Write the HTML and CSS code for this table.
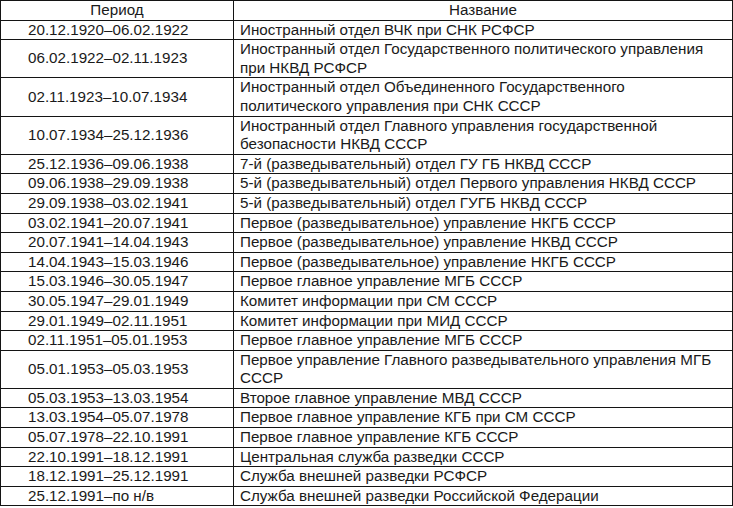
FILE: index.html
```html
<!DOCTYPE html>
<html lang="ru">
<head>
<meta charset="utf-8">
<title>Разведка</title>
<link rel="stylesheet" href="styles.css">
</head>
<body>
<table class="history">
  <colgroup>
    <col class="col-period">
    <col class="col-name">
  </colgroup>
  <thead>
    <tr><th>Период</th><th>Название</th></tr>
  </thead>
  <tbody>
    <tr><td class="period">20.12.1920–06.02.1922</td><td>Иностранный отдел ВЧК при СНК РСФСР</td></tr>
    <tr><td class="period">06.02.1922–02.11.1923</td><td>Иностранный отдел Государственного политического управления<br>при НКВД РСФСР</td></tr>
    <tr><td class="period">02.11.1923–10.07.1934</td><td>Иностранный отдел Объединенного Государственного<br>политического управления при СНК СССР</td></tr>
    <tr><td class="period">10.07.1934–25.12.1936</td><td>Иностранный отдел Главного управления государственной<br>безопасности НКВД СССР</td></tr>
    <tr><td class="period">25.12.1936–09.06.1938</td><td>7-й (разведывательный) отдел ГУ ГБ НКВД СССР</td></tr>
    <tr><td class="period">09.06.1938–29.09.1938</td><td>5-й (разведывательный) отдел Первого управления НКВД СССР</td></tr>
    <tr><td class="period">29.09.1938–03.02.1941</td><td>5-й (разведывательный) отдел ГУГБ НКВД СССР</td></tr>
    <tr><td class="period">03.02.1941–20.07.1941</td><td>Первое (разведывательное) управление НКГБ СССР</td></tr>
    <tr><td class="period">20.07.1941–14.04.1943</td><td>Первое (разведывательное) управление НКВД СССР</td></tr>
    <tr><td class="period">14.04.1943–15.03.1946</td><td>Первое (разведывательное) управление НКГБ СССР</td></tr>
    <tr><td class="period">15.03.1946–30.05.1947</td><td>Первое главное управление МГБ СССР</td></tr>
    <tr><td class="period">30.05.1947–29.01.1949</td><td>Комитет информации при СМ СССР</td></tr>
    <tr><td class="period">29.01.1949–02.11.1951</td><td>Комитет информации при МИД СССР</td></tr>
    <tr><td class="period">02.11.1951–05.01.1953</td><td>Первое главное управление МГБ СССР</td></tr>
    <tr><td class="period">05.01.1953–05.03.1953</td><td>Первое управление Главного разведывательного управления МГБ<br>СССР</td></tr>
    <tr><td class="period">05.03.1953–13.03.1954</td><td>Второе главное управление МВД СССР</td></tr>
    <tr><td class="period">13.03.1954–05.07.1978</td><td>Первое главное управление КГБ при СМ СССР</td></tr>
    <tr><td class="period">05.07.1978–22.10.1991</td><td>Первое главное управление КГБ СССР</td></tr>
    <tr><td class="period">22.10.1991–18.12.1991</td><td>Центральная служба разведки СССР</td></tr>
    <tr><td class="period">18.12.1991–25.12.1991</td><td>Служба внешней разведки РСФСР</td></tr>
    <tr><td class="period">25.12.1991–по н/в</td><td>Служба внешней разведки Российской Федерации</td></tr>
  </tbody>
</table>
</body>
</html>
```

FILE: styles.css
```css
html, body {
  margin: 0;
  padding: 0;
  background: #ffffff;
}

.history {
  border-collapse: collapse;
  table-layout: fixed;
  width: 733px;
  font-family: "Liberation Sans", Arial, sans-serif;
  font-size: 15.2px;
  line-height: 18.6px;
  color: #1a1a1a;
}

.col-period {
  width: 233px;
}

.history th,
.history td {
  border: 1px solid #141414;
  padding: 0 6px;
  vertical-align: middle;
  white-space: nowrap;
}

.history th {
  font-weight: normal;
  text-align: center;
}

.history td {
  text-align: left;
}

.history td.period {
  padding-left: 27px;
}
```
